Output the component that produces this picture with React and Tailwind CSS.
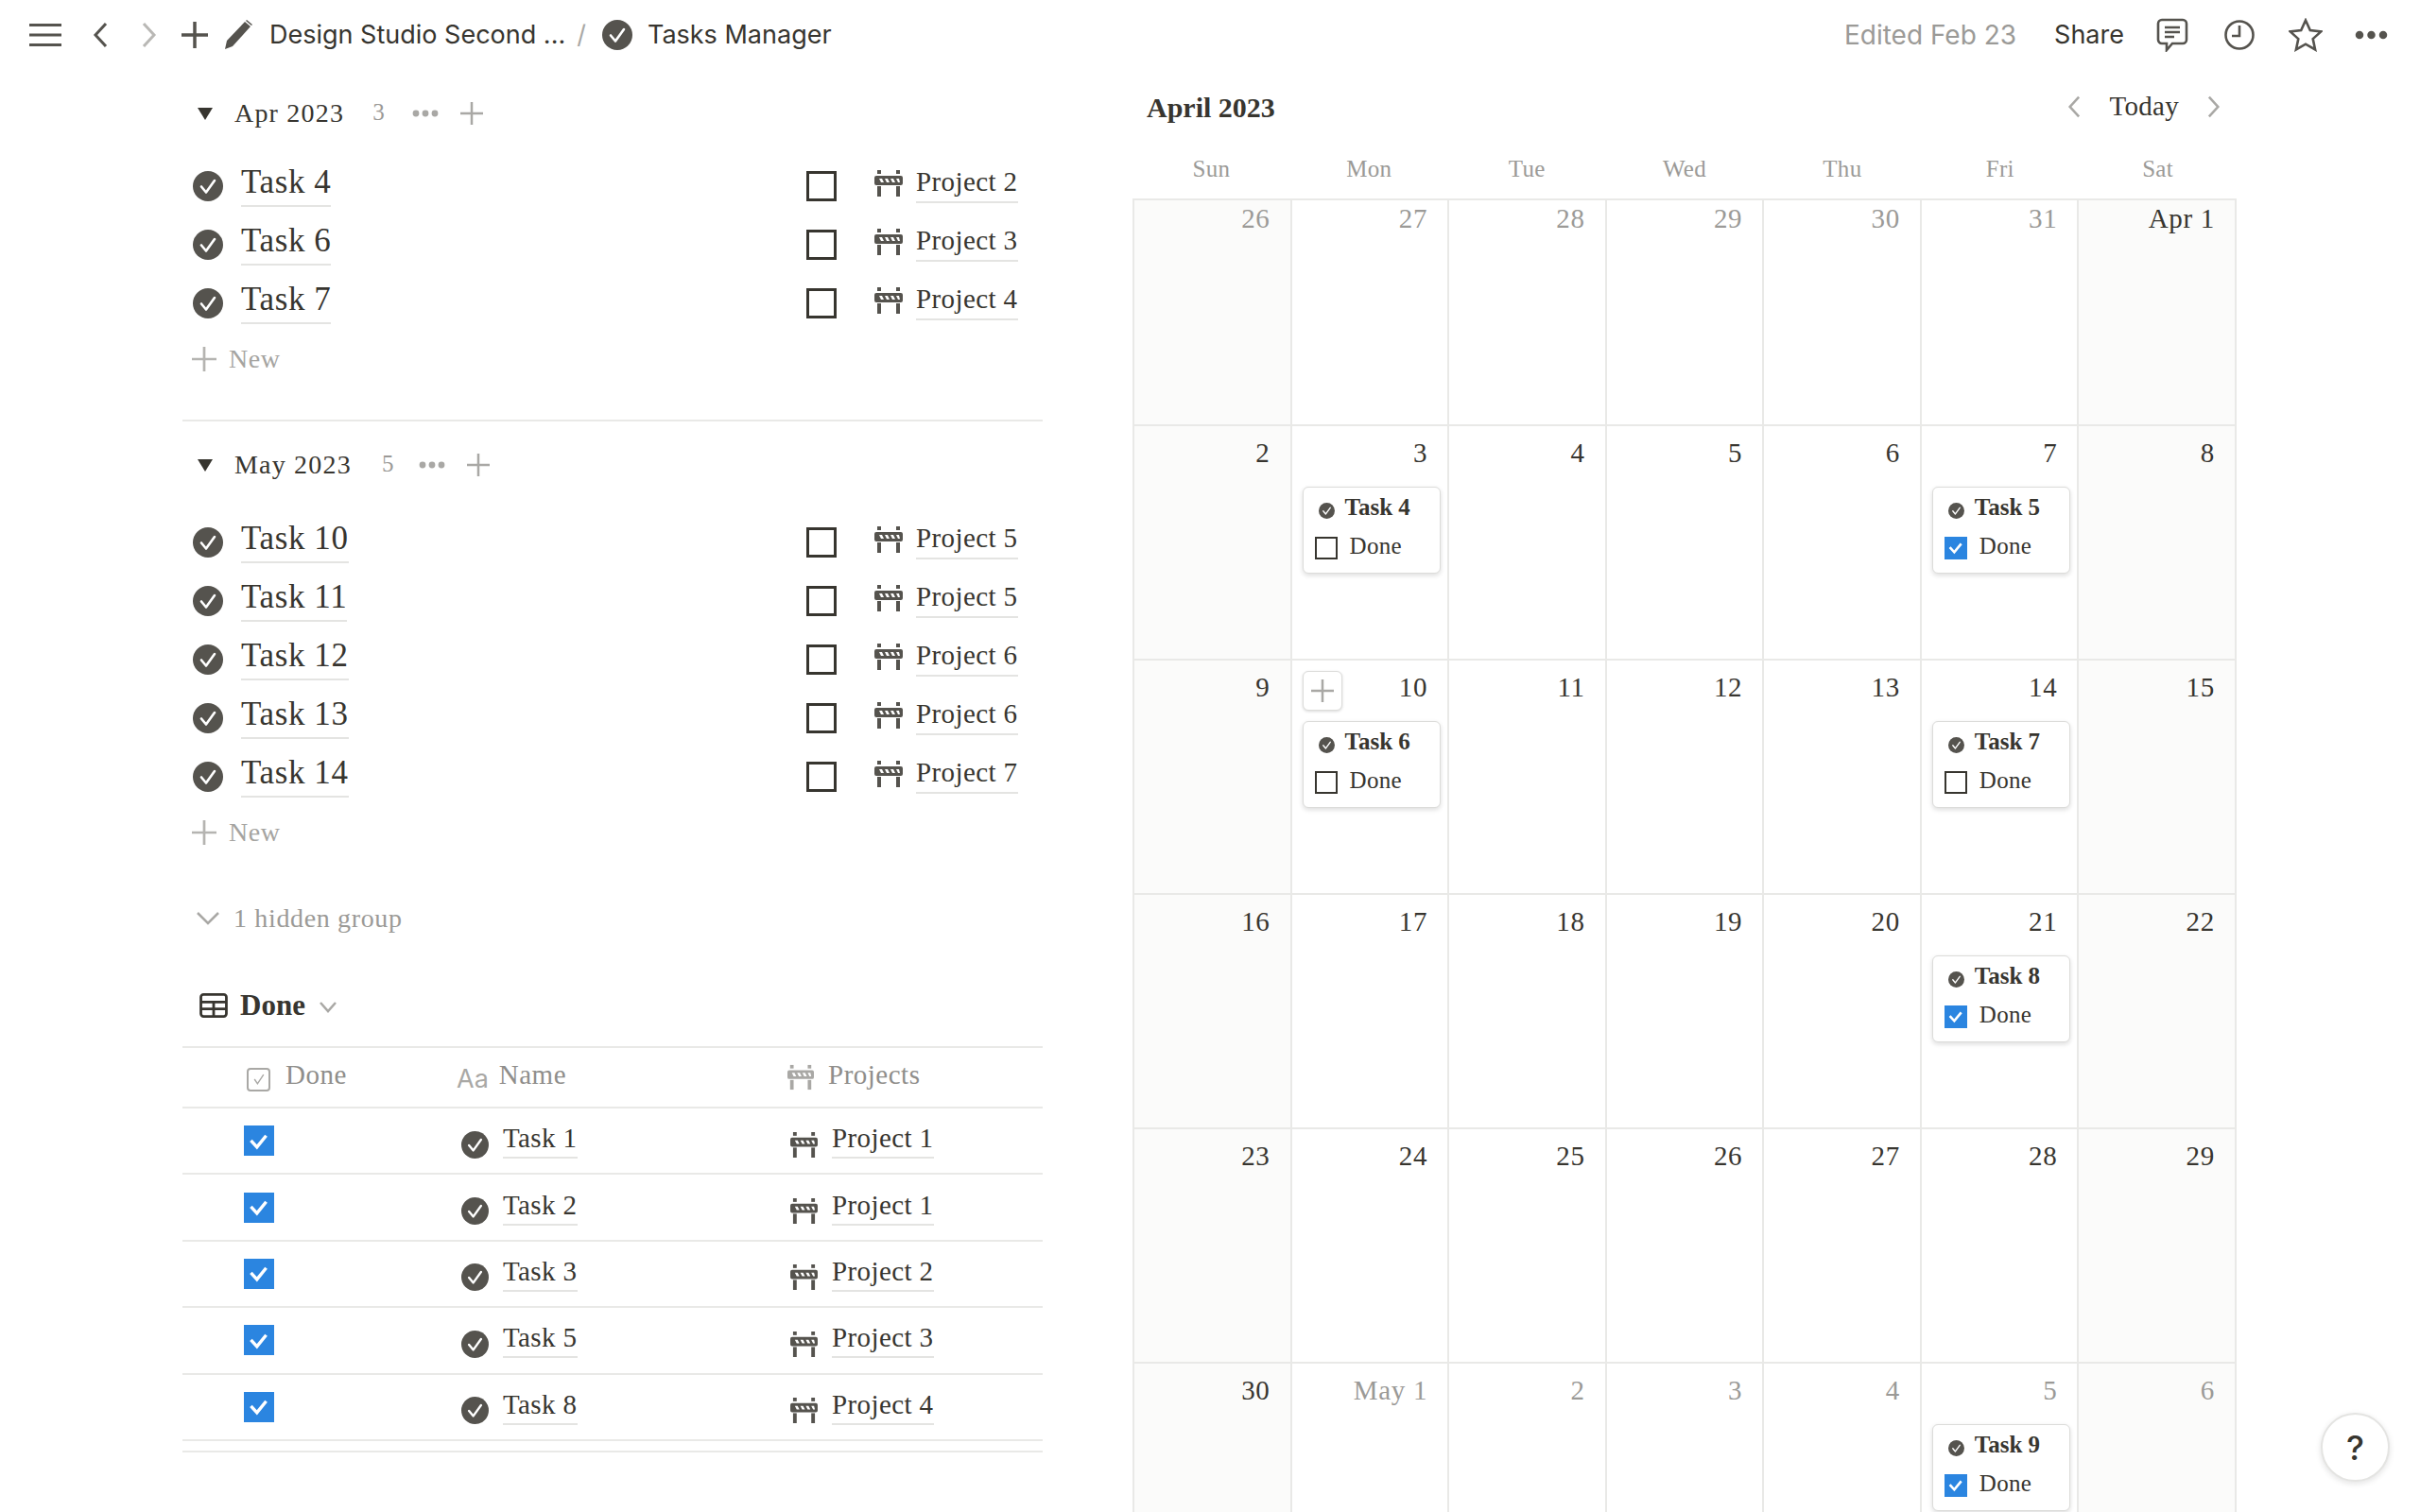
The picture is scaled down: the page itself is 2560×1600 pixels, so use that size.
import React from 'react';

const serif = "font-['Liberation_Serif',serif]";

// -------- Data --------
const aprilTasks = [['Task 4', 'Project 2'], ['Task 6', 'Project 3'], ['Task 7', 'Project 4']];
const mayTasks = [
  ['Task 10', 'Project 5'],
  ['Task 11', 'Project 5'],
  ['Task 12', 'Project 6'],
  ['Task 13', 'Project 6'],
  ['Task 14', 'Project 7'],
];
const doneRows = [
  ['Task 1', 'Project 1'],
  ['Task 2', 'Project 1'],
  ['Task 3', 'Project 2'],
  ['Task 5', 'Project 3'],
  ['Task 8', 'Project 4'],
];
const days = ['Sun', 'Mon', 'Tue', 'Wed', 'Thu', 'Fri', 'Sat'];
const weeks = [
  ['26', '27', '28', '29', '30', '31', 'Apr 1'],
  ['2', '3', '4', '5', '6', '7', '8'],
  ['9', '10', '11', '12', '13', '14', '15'],
  ['16', '17', '18', '19', '20', '21', '22'],
  ['23', '24', '25', '26', '27', '28', '29'],
  ['30', 'May 1', '2', '3', '4', '5', '6'],
];
const muted = { '0-0': 1, '0-1': 1, '0-2': 1, '0-3': 1, '0-4': 1, '0-5': 1, '5-1': 1, '5-2': 1, '5-3': 1, '5-4': 1, '5-5': 1, '5-6': 1 };
const cards = {
  '1-1': ['Task 4', false],
  '1-5': ['Task 5', true],
  '2-1': ['Task 6', false],
  '2-5': ['Task 7', false],
  '3-5': ['Task 8', true],
  '5-5': ['Task 9', true],
};

// -------- Icons --------
function StatusIcon({ className }) {
  return (
    <svg viewBox="0 0 32 32" className={className}>
      <circle cx="16" cy="16" r="16" fill="#55534e" />
      <path d="M9 16.5l5 6 9-12.5" fill="none" stroke="#fff" strokeWidth="2.6" strokeLinecap="round" strokeLinejoin="round" />
    </svg>
  );
}

function BarrierIcon({ className, color = '#55534e' }) {
  return (
    <svg viewBox="0 0 30 28" className={className} fill={color}>
      <rect x="3" y="0" width="4" height="4" />
      <rect x="23" y="0" width="4" height="4" />
      <rect x="3" y="17" width="4" height="11" />
      <rect x="23" y="17" width="4" height="11" />
      <path fillRule="evenodd" d="M2 6h26a2 2 0 0 1 2 2v6a2 2 0 0 1-2 2H2a2 2 0 0 1-2-2V8a2 2 0 0 1 2-2zM5 9l2 4h3L8 9zM11 9l2 4h3l-2-4zM17 9l2 4h3l-2-4zM23 9l2 4h2l-1-4z" />
    </svg>
  );
}

function Plus({ className, color = '#a9a8a5', width = 2.5 }) {
  return (
    <svg viewBox="0 0 24 24" className={className} fill="none" stroke={color} strokeWidth={width}>
      <path d="M12 0v24M0 12h24" />
    </svg>
  );
}

function Dots({ className, color = '#a9a8a5' }) {
  return (
    <svg viewBox="0 0 28 8" className={className} fill={color}>
      <circle cx="4" cy="4" r="3.4" />
      <circle cx="14" cy="4" r="3.4" />
      <circle cx="24" cy="4" r="3.4" />
    </svg>
  );
}

function Chevron({ dir, className, color = '#a9a8a5', width = 3 }) {
  return (
    <svg viewBox="0 0 16 28" className={className} fill="none" stroke={color} strokeWidth={width}>
      <path d={dir === 'left' ? 'M14 2L3 14l11 12' : 'M2 2l11 12L2 26'} />
    </svg>
  );
}

function Box({ checked, small, className = '' }) {
  const size = small ? 'w-[24px] h-[24px]' : 'w-[32px] h-[32px]';
  if (checked) {
    return (
      <span className={`${size} ${className} bg-[#2b85e0] flex items-center justify-center shrink-0`}>
        <svg viewBox="0 0 20 20" className="w-[72%] h-[72%]" fill="none" stroke="#fff" strokeWidth="3">
          <path d="M3 9.5l5.5 6L17 5" />
        </svg>
      </span>
    );
  }
  return <span className={`${size} ${className} block ${small ? 'border-2' : 'border-[3px]'} border-[#37352f] shrink-0`} />;
}

function Linked({ children, className }) {
  return <span className={`border-b-2 border-[#e4e4e2] ${className}`}>{children}</span>;
}

// -------- Left column pieces --------
function GroupHeader({ label, count, countMl, dotsMl, plusMl, className }) {
  return (
    <div className={`flex items-center h-[46px] ${serif} ${className}`}>
      <span className="w-0 h-0 ml-[16px] border-x-[8px] border-x-transparent border-t-[13px] border-t-[#37352f]" />
      <span className="ml-[23px] text-[28px] text-[#37352f] tracking-[1.2px]">{label}</span>
      <span className={`${countMl} -mt-[2px] text-[25px] text-[#9b9a97]`}>{count}</span>
      <Dots className={`${dotsMl} w-[28px] h-[8px]`} />
      <Plus className={`${plusMl} w-[24px] h-[24px]`} />
    </div>
  );
}

function TaskRow({ task, project }) {
  return (
    <div className={`flex items-center h-[62px] ${serif}`}>
      <StatusIcon className="ml-[11px] mt-[5px] w-[32px] h-[32px] shrink-0" />
      <span className="ml-[19px] w-[598px] flex -mt-[1px]">
        <Linked className="text-[35px] leading-[49px] text-[#37352f] tracking-[0.6px]">{task}</Linked>
      </span>
      <Box className="mt-[5px]" />
      <BarrierIcon className="ml-[40px] w-[30px] h-[28px] shrink-0" />
      <Linked className="ml-[14px] -mt-[2px] text-[29px] leading-[42px] text-[#37352f] tracking-[0.4px]">{project}</Linked>
    </div>
  );
}

function NewRow() {
  return (
    <div className={`flex items-center h-[62px] ${serif}`}>
      <Plus className="ml-[10px] w-[26px] h-[26px]" color="#b5b4b1" />
      <span className="ml-[13px] text-[28px] text-[#a5a4a1] tracking-[0.6px]">New</span>
    </div>
  );
}

function LeftColumn() {
  return (
    <div className="w-[910px] ml-[193px] pt-[23px] shrink-0">
      <GroupHeader label="Apr 2023" count="3" countMl="ml-[30px]" dotsMl="ml-[29px]" plusMl="ml-[23px]" />
      <div className="mt-[20px]">
        {aprilTasks.map(([t, p]) => <TaskRow key={t} task={t} project={p} />)}
      </div>
      <NewRow />
      <div className="mt-[33px] border-t-2 border-[#e9e9e7]" />
      <GroupHeader label="May 2023" count="5" countMl="ml-[32px]" dotsMl="ml-[27px]" plusMl="ml-[23px]" className="mt-[23px]" />
      <div className="mt-[25px]">
        {mayTasks.map(([t, p]) => <TaskRow key={t} task={t} project={p} />)}
      </div>
      <NewRow />
      <div className={`mt-[37px] h-[46px] flex items-center ${serif}`}>
        <svg viewBox="0 0 24 14" className="ml-[15px] w-[24px] h-[14px]" fill="none" stroke="#a9a8a5" strokeWidth="2.5">
          <path d="M1 1l11 11L23 1" />
        </svg>
        <span className="ml-[15px] text-[28px] text-[#9b9a97] tracking-[0.65px]">1 hidden group</span>
      </div>
      <div className={`mt-[46px] h-[46px] flex items-center ${serif}`}>
        <svg viewBox="0 0 32 28" className="ml-[17px] w-[32px] h-[26px]" fill="none" stroke="#37352f" strokeWidth="3">
          <rect x="1.5" y="1.5" width="29" height="25" rx="3" />
          <path d="M1.5 10h29M1.5 18h29M16 10v17" />
        </svg>
        <span className="ml-[12px] text-[31px] font-bold text-[#37352f]">Done</span>
        <svg viewBox="0 0 18 12" className="ml-[15px] mt-[3px] w-[18px] h-[12px]" fill="none" stroke="#a9a8a5" strokeWidth="2.5">
          <path d="M1 1l8 9 8-9" />
        </svg>
      </div>
      <div className={`mt-[20px] ${serif}`}>
        <div className="grid grid-cols-[290px_350px_1fr] h-[66px] items-center border-y-2 border-[#e9e9e7] text-[29px] text-[#8f8e8b] tracking-[0.5px]">
          <div className="flex items-center pl-[68px]">
            <span className="w-[25px] h-[25px] mt-[4px] border-2 border-[#a9a8a5] rounded-[4px] flex items-center justify-center">
              <svg viewBox="0 0 20 20" className="w-[16px] h-[16px]" fill="none" stroke="#a9a8a5" strokeWidth="1.8">
                <path d="M4 10l4 6 8-12" />
              </svg>
            </span>
            <span className="ml-[16px] -mt-[5px]">Done</span>
          </div>
          <div className="flex items-center">
            <span className="font-['Inter',sans-serif] text-[27px] mt-[4px] text-[#a9a8a5] tracking-normal">Aa</span>
            <span className="ml-[11px] -mt-[5px]">Name</span>
          </div>
          <div className="flex items-center">
            <BarrierIcon className="w-[28px] h-[28px]" color="#a9a8a5" />
            <span className="ml-[15px] -mt-[5px]">Projects</span>
          </div>
        </div>
        {doneRows.map(([t, p]) => (
          <div key={t} className="grid grid-cols-[290px_350px_1fr] h-[70.4px] items-center border-b-2 border-[#e9e9e7] text-[29px] text-[#37352f] tracking-[0.4px]">
            <div className="pl-[65px]"><Box checked /></div>
            <div className="flex items-center pl-[5px]">
              <StatusIcon className="w-[29px] h-[29px] mt-[8px] shrink-0" />
              <Linked className="ml-[15px] -mt-[3px] leading-[39px]">{t}</Linked>
            </div>
            <div className="flex items-center pl-[3px]">
              <BarrierIcon className="w-[29px] h-[27px] mt-[8px] shrink-0" />
              <Linked className="ml-[15px] -mt-[3px] leading-[39px]">{p}</Linked>
            </div>
          </div>
        ))}
        <div className="mt-[10px] border-t-2 border-[#e9e9e7]" />
      </div>
    </div>
  );
}

// -------- Calendar --------
function Card({ title, checked }) {
  return (
    <div className="ml-[11px] mt-[18px] w-[146px] h-[92px] bg-white rounded-[6px] border border-[#dcdcda] shadow-[0_2px_5px_rgba(15,15,15,0.14)] pl-[12px] pt-[6px] text-[#37352f]">
      <div className="flex items-center h-[30px]">
        <StatusIcon className="ml-[4px] mt-[7px] w-[17px] h-[17px] shrink-0" />
        <span className="ml-[11px] text-[25px] font-bold">{title}</span>
      </div>
      <div className="flex items-center h-[38px] mt-[7px]">
        <Box small checked={checked} className="mt-[3px]" />
        <span className="ml-[13px] text-[25px] tracking-[0.3px]">Done</span>
      </div>
    </div>
  );
}

function Calendar() {
  return (
    <div className={`ml-[95px] w-[1168px] pt-[16px] shrink-0 ${serif}`}>
      <div className="flex items-center h-[46px] pl-[15px]">
        <span className="text-[30px] font-bold text-[#37352f]">April 2023</span>
        <Chevron dir="left" className="ml-auto w-[16px] h-[24px]" />
        <span className="ml-[29px] text-[29px] text-[#37352f] tracking-[0.3px]">Today</span>
        <Chevron dir="right" className="ml-[29px] mr-[16px] w-[16px] h-[24px]" />
      </div>
      <div className="mt-[23px] grid grid-cols-7 h-[40px] items-center text-center text-[25px] text-[#9b9a97] tracking-[0.3px]">
        {days.map((d) => <span key={d}>{d}</span>)}
      </div>
      <div className="mt-[11px] grid grid-cols-7 grid-rows-[239px_248px_248px_248px_248px_248px] border-l-2 border-t-2 border-[#e9e9e7]">
        {weeks.map((week, r) =>
          week.map((label, c) => {
            const key = `${r}-${c}`;
            return (
              <div
                key={key}
                className={`relative border-r-2 border-b-2 border-[#e9e9e7] ${c === 0 || c === 6 ? 'bg-[#fbfbfa]' : 'bg-white'}`}
              >
                <div
                  className={`${r === 0 ? 'pt-[1px]' : 'pt-[10px]'} pr-[21px] h-[46px] text-right text-[29px] leading-[36px] tracking-[0.7px] ${muted[key] ? 'text-[#9b9a97]' : 'text-[#37352f]'}`}
                >
                  {label}
                </div>
                {key === '2-1' && (
                  <span className="absolute left-[11px] top-[11px] w-[42px] h-[42px] bg-white rounded-[6px] border border-[#dcdcda] shadow-[0_1px_3px_rgba(15,15,15,0.16)] flex items-center justify-center">
                    <Plus className="w-[24px] h-[24px]" />
                  </span>
                )}
                {cards[key] && <Card title={cards[key][0]} checked={cards[key][1]} />}
              </div>
            );
          })
        )}
      </div>
    </div>
  );
}

// -------- Top bar --------
function TopBar() {
  return (
    <div className="h-[74px] flex items-center font-['Inter',sans-serif] text-[27px]">
      <svg viewBox="0 0 34 26" className="ml-[31px] w-[34px] h-[26px]" fill="#55534e">
        <rect y="1" width="34" height="3" />
        <rect y="11.5" width="34" height="3" />
        <rect y="22" width="34" height="3" />
      </svg>
      <Chevron dir="left" className="ml-[33px] w-[16px] h-[28px]" color="#55534e" />
      <Chevron dir="right" className="ml-[36px] w-[16px] h-[28px]" color="#b9b8b5" />
      <Plus className="ml-[26px] w-[28px] h-[28px]" color="#55534e" width={3} />
      <svg viewBox="0 0 30 32" className="ml-[17px] w-[30px] h-[32px]" fill="#55534e">
        <path d="M22 2l6 5L9 28l-8 3 2-9zM24 0l6 5-1 1-6-5z" />
      </svg>
      <span className="ml-[18px] text-[#37352f] whitespace-nowrap">Design Studio Second ...</span>
      <span className="ml-[12px] text-[#a9a8a5]">/</span>
      <StatusIcon className="ml-[17px] w-[32px] h-[32px]" />
      <span className="ml-[16px] text-[#37352f]">Tasks Manager</span>
      <span className="ml-auto text-[28px] text-[#9b9a97]">Edited Feb 23</span>
      <span className="ml-[40px] text-[#37352f]">Share</span>
      <svg viewBox="0 0 34 36" className="ml-[34px] w-[34px] h-[36px]" fill="none" stroke="#55534e" strokeWidth="2.6">
        <path d="M6 2h22a4 4 0 0 1 4 4v17a4 4 0 0 1-4 4H17l-6 7v-7H6a4 4 0 0 1-4-4V6a4 4 0 0 1 4-4z" />
        <path d="M9 10h16M9 15h16M9 20h10" />
      </svg>
      <svg viewBox="0 0 32 32" className="ml-[38px] w-[32px] h-[32px]" fill="none" stroke="#55534e" strokeWidth="2.6">
        <circle cx="16" cy="16" r="14.5" />
        <path d="M16 6v11H8" />
      </svg>
      <svg viewBox="0 0 36 36" className="ml-[36px] w-[36px] h-[36px]" fill="none" stroke="#55534e" strokeWidth="2.6">
        <path d="M18 2.5l4.8 10.6 11.5 1.3-8.6 7.7 2.4 11.4L18 27.7 7.9 33.5l2.4-11.400-8.600-7.700 11.500-1.300z" />
      </svg>
      <Dots className="ml-[33px] mr-[33px] w-[37px] h-[10px]" color="#55534e" />
    </div>
  );
}

export default function App() {
  return (
    <div className="relative w-[2560px] h-[1600px] overflow-hidden bg-white">
      <TopBar />
      <div className="flex items-start">
        <LeftColumn />
        <Calendar />
      </div>
      <span className="absolute left-[2455px] top-[1495px] w-[73px] h-[73px] rounded-full bg-white border-2 border-[#e4e4e2] shadow-[0_2px_6px_rgba(15,15,15,0.12)] flex items-center justify-center font-['Inter',sans-serif] text-[36px] font-medium text-[#37352f]">
        ?
      </span>
    </div>
  );
}
